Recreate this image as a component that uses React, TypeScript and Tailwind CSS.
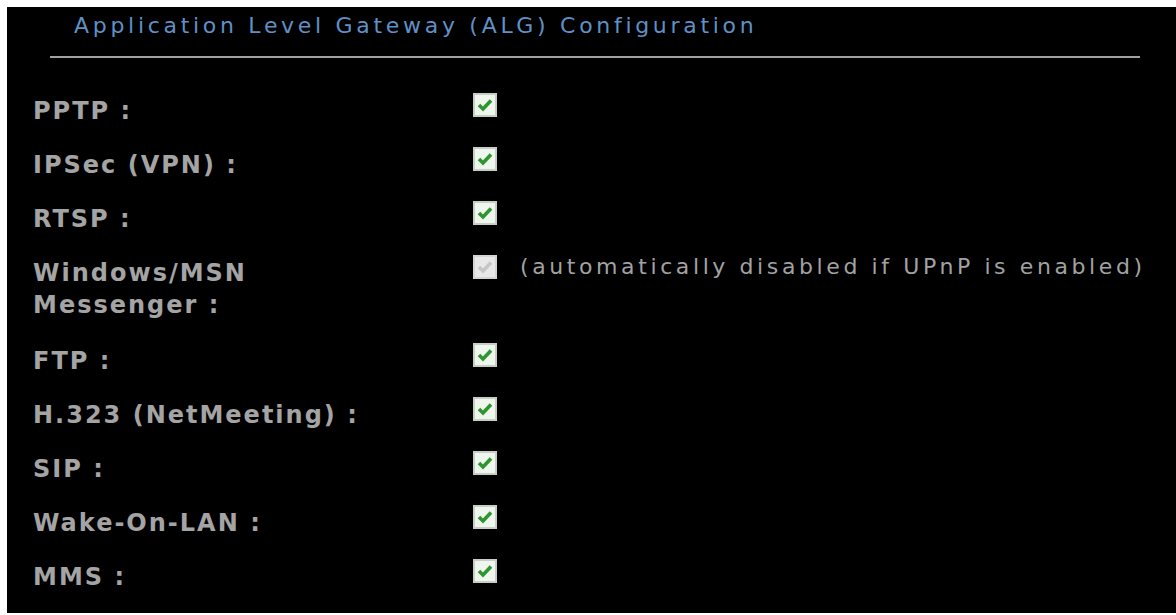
import React from "react";

const rows: { label: string; disabled?: boolean; note?: string; twoLine?: boolean }[] = [
  { label: "PPTP :" },
  { label: "IPSec (VPN) :" },
  { label: "RTSP :" },
  { label: "Windows/MSN Messenger :", disabled: true, note: "(automatically disabled if UPnP is enabled)", twoLine: true },
  { label: "FTP :" },
  { label: "H.323 (NetMeeting) :" },
  { label: "SIP :" },
  { label: "Wake-On-LAN :" },
  { label: "MMS :" },
];

function Check({ disabled }: { disabled?: boolean }) {
  return (
    <div
      className={
        disabled
          ? "w-[24px] h-[24px] border-2 border-[#d4d4d4] bg-[#e8e8e8] flex items-center justify-center"
          : "w-[24px] h-[24px] border-2 border-[#c6cec6] bg-[#eef6ee] flex items-center justify-center"
      }
    >
      <svg width="18" height="18" viewBox="0 0 18 18">
        <path
          d="M3 9 L7 13 L15 4.5"
          fill="none"
          stroke={disabled ? "#c6c6c6" : "#2f962f"}
          strokeWidth="3.6"
          strokeLinecap="butt"
          strokeLinejoin="miter"
        />
      </svg>
    </div>
  );
}

export default function App() {
  return (
    <div className="w-[1176px] h-[615px] bg-white pl-[7px] pt-[7px] pb-[2px]">
      <div className="w-full h-full bg-black flex flex-col" style={{ fontFamily: '"DejaVu Sans", Verdana, sans-serif' }}>
        <div className="pl-[67px] pt-[5px] text-[22px] leading-[28px] text-[#5f90c6] tracking-[3.7px] whitespace-nowrap">
          Application Level Gateway (ALG) Configuration
        </div>
        <div className="ml-[43px] mr-[36px] mt-[16px] h-[2px] bg-[#a0a0a0]" />
        <div className="flex flex-col pt-[30px]">
          {rows.map((r) => (
            <div key={r.label} className={r.twoLine ? "flex h-[88px]" : "flex h-[54px]"}>
              <div className="w-[466px] shrink-0 pl-[26px] pr-[70px] pt-[7px] text-[24px] leading-[32px] font-bold text-[#a4a4a4] tracking-[2px]">
                {r.label}
              </div>
              <div className="flex items-start pt-[5px]">
                <Check disabled={r.disabled} />
                {r.note && (
                  <span className="ml-[23px] -mt-[2px] text-[22px] leading-[28px] text-[#a2a2a2] tracking-[3.6px] whitespace-nowrap">
                    {r.note}
                  </span>
                )}
              </div>
            </div>
          ))}
        </div>
      </div>
    </div>
  );
}
